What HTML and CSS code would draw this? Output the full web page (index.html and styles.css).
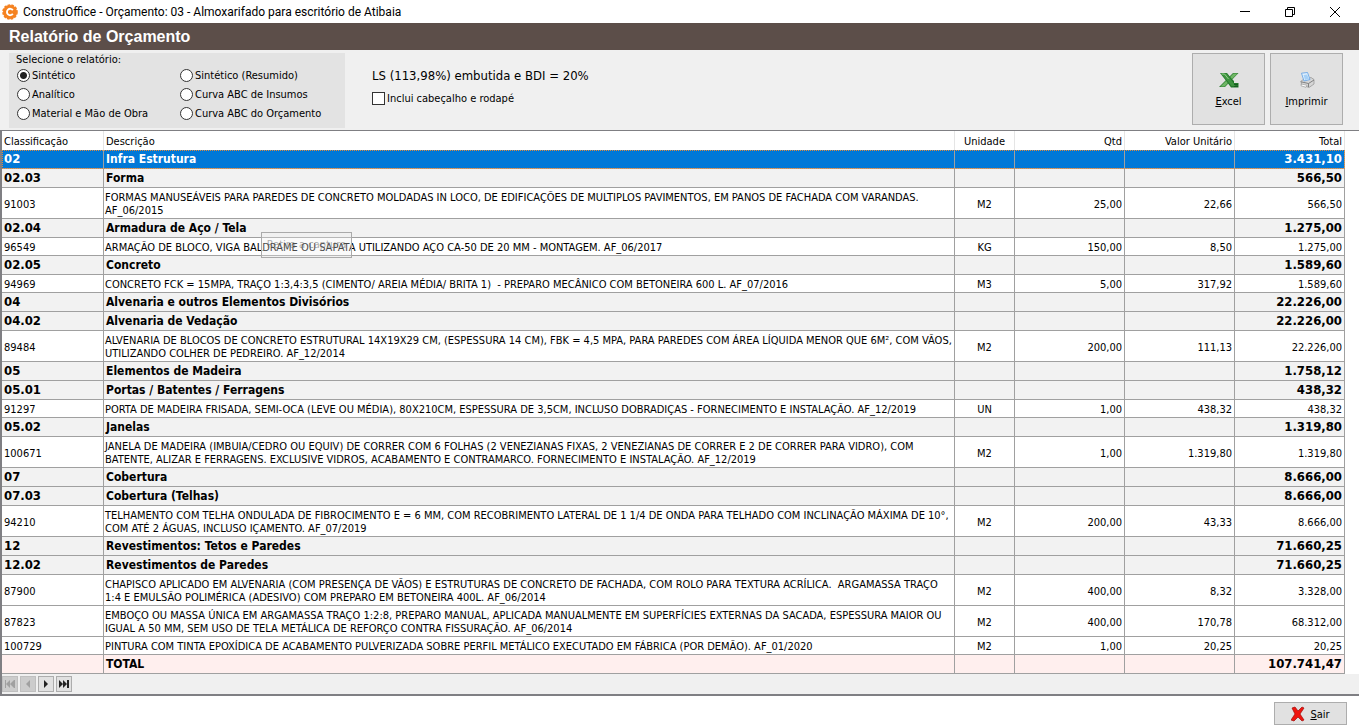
FILE: index.html
```html
<!DOCTYPE html>
<html lang="pt-BR">
<head>
<meta charset="utf-8">
<title>ConstruOffice - Orçamento: 03 - Almoxarifado para escritório de Atibaia</title>
<link rel="stylesheet" href="styles.css">
</head>
<body>
<header class="titlebar">
  <svg class="app-icon" viewBox="0 0 16 16" width="16" height="16" aria-hidden="true"><circle cx="8" cy="8" r="7" fill="#f58220" stroke="#f58220" stroke-width="1.6" stroke-dasharray="2.6 1.2"/><path d="M10.8 6.2A3.2 3.2 0 1 0 10.8 9.8" fill="none" stroke="#fff" stroke-width="1.9"/></svg>
  <span class="window-title">ConstruOffice - Orçamento: 03 - Almoxarifado para escritório de Atibaia</span>
  <div class="window-controls">
    <button type="button" aria-label="Minimizar"><svg viewBox="0 0 12 12" width="12" height="12"><path d="M1 5.500h10" stroke="#000" fill="none"/></svg></button>
    <button type="button" aria-label="Restaurar"><svg viewBox="0 0 12 12" width="12" height="12"><path d="M1.500 3.500h7v7h-7zM3.500 3.500v-2h7v7h-2" stroke="#000" fill="none"/></svg></button>
    <button type="button" aria-label="Fechar"><svg viewBox="0 0 12 12" width="12" height="12"><path d="M1 1l10 10M11 1L1 11" stroke="#000" fill="none"/></svg></button>
  </div>
</header>
<h1 class="heading">Relatório de Orçamento</h1>
<section class="toolbar">
  <fieldset class="report-types">
    <legend>Selecione o relatório:</legend>
    <div class="options">
      <label><input type="radio" name="tipo" checked>Sintético</label>
      <label><input type="radio" name="tipo">Sintético (Resumido)</label>
      <label><input type="radio" name="tipo">Analítico</label>
      <label><input type="radio" name="tipo">Curva ABC de Insumos</label>
      <label><input type="radio" name="tipo">Material e Mão de Obra</label>
      <label><input type="radio" name="tipo">Curva ABC do Orçamento</label>
    </div>
  </fieldset>
  <div class="settings">
    <p class="rates">LS (113,98%) embutida e BDI = 20%</p>
    <label><input type="checkbox">Inclui cabeçalho e rodapé</label>
  </div>
  <div class="actions">
    <button type="button" class="action">
      <svg viewBox="0 0 20 16" width="20" height="16" aria-hidden="true"><path d="M14 1h5.500L6 15H0z" fill="#2f7d32"/><path d="M14.500 1.500h4L5.500 14.500H1.500z" fill="#6fb765"/><path d="M1 1h7l4 5 3 3v2h4.500v4.500H12L8 10z" fill="#23782b"/><path d="M2 1.500h5.500l9 12.500h-4z" fill="#3f9440"/><path d="M2.500 2h3l4 5" fill="none" stroke="#8fcf86"/><path d="M15 12.500h4M15 14.500h4" stroke="#165c20"/></svg>
      <span><u>E</u>xcel</span>
    </button>
    <button type="button" class="action">
      <svg viewBox="0 0 16 16" width="16" height="16" aria-hidden="true"><path d="M2.500 11l-1-1.500L5 7l7-1.500 3 2v4.500l-5 3.500-8-3z" fill="#d6d6d6" stroke="#999" stroke-width=".8"/><path d="M2.500 1.200L8.500.5l2.500 7-6 1.500z" fill="#e3f1fd" stroke="#6aa6e6" stroke-width=".9"/><path d="M4.500 3l3.500-.5 2 4.500-4 1z" fill="#a5d0f7"/><path d="M2 9.800l7.500 1.700L15 8M9.500 11.500v3.500" fill="none" stroke="#777" stroke-width=".9"/><path d="M2.500 12l5.500 1.300-1 2-5-1.500z" fill="#fff" stroke="#999" stroke-width=".7"/></svg>
      <span><u>I</u>mprimir</span>
    </button>
  </div>
</section>
<main class="grid-panel">
  <table class="budget">
    <colgroup><col class="c-code"><col><col class="c-unit"><col class="c-num"><col class="c-num"><col class="c-num"></colgroup>
    <thead><tr><th>Classificação</th><th>Descrição</th><th>Unidade</th><th>Qtd</th><th>Valor Unitário</th><th>Total</th></tr></thead>
    <tbody>
      <tr class="group selected"><td>02</td><td>Infra Estrutura</td><td></td><td></td><td></td><td>3.431,10</td></tr>
      <tr class="group"><td>02.03</td><td>Forma</td><td></td><td></td><td></td><td>566,50</td></tr>
      <tr class="item"><td>91003</td><td>FORMAS MANUSEÁVEIS PARA PAREDES DE CONCRETO MOLDADAS IN LOCO, DE EDIFICAÇÕES DE MULTIPLOS PAVIMENTOS, EM PANOS DE FACHADA COM VARANDAS.<br>AF_06/2015</td><td>M2</td><td>25,00</td><td>22,66</td><td>566,50</td></tr>
      <tr class="group"><td>02.04</td><td>Armadura de Aço / Tela</td><td></td><td></td><td></td><td>1.275,00</td></tr>
      <tr class="item"><td>96549</td><td class="hinted">ARMAÇÃO DE BLOCO, VIGA BALDRAME OU SAPATA UTILIZANDO AÇO CA-50 DE 20 MM - MONTAGEM. AF_06/2017<span class="hint">Retira a captura</span></td><td>KG</td><td>150,00</td><td>8,50</td><td>1.275,00</td></tr>
      <tr class="group"><td>02.05</td><td>Concreto</td><td></td><td></td><td></td><td>1.589,60</td></tr>
      <tr class="item"><td>94969</td><td>CONCRETO FCK = 15MPA, TRAÇO 1:3,4:3,5 (CIMENTO/ AREIA MÉDIA/ BRITA 1) &nbsp;- PREPARO MECÂNICO COM BETONEIRA 600 L. AF_07/2016</td><td>M3</td><td>5,00</td><td>317,92</td><td>1.589,60</td></tr>
      <tr class="group"><td>04</td><td>Alvenaria e outros Elementos Divisórios</td><td></td><td></td><td></td><td>22.226,00</td></tr>
      <tr class="group"><td>04.02</td><td>Alvenaria de Vedação</td><td></td><td></td><td></td><td>22.226,00</td></tr>
      <tr class="item"><td>89484</td><td>ALVENARIA DE BLOCOS DE CONCRETO ESTRUTURAL 14X19X29 CM, (ESPESSURA 14 CM), FBK = 4,5 MPA, PARA PAREDES COM ÁREA LÍQUIDA MENOR QUE 6M², COM VÃOS,<br>UTILIZANDO COLHER DE PEDREIRO. AF_12/2014</td><td>M2</td><td>200,00</td><td>111,13</td><td>22.226,00</td></tr>
      <tr class="group"><td>05</td><td>Elementos de Madeira</td><td></td><td></td><td></td><td>1.758,12</td></tr>
      <tr class="group"><td>05.01</td><td>Portas / Batentes / Ferragens</td><td></td><td></td><td></td><td>438,32</td></tr>
      <tr class="item"><td>91297</td><td>PORTA DE MADEIRA FRISADA, SEMI-OCA (LEVE OU MÉDIA), 80X210CM, ESPESSURA DE 3,5CM, INCLUSO DOBRADIÇAS - FORNECIMENTO E INSTALAÇÃO. AF_12/2019</td><td>UN</td><td>1,00</td><td>438,32</td><td>438,32</td></tr>
      <tr class="group"><td>05.02</td><td>Janelas</td><td></td><td></td><td></td><td>1.319,80</td></tr>
      <tr class="item"><td>100671</td><td>JANELA DE MADEIRA (IMBUIA/CEDRO OU EQUIV) DE CORRER COM 6 FOLHAS (2 VENEZIANAS FIXAS, 2 VENEZIANAS DE CORRER E 2 DE CORRER PARA VIDRO), COM<br>BATENTE, ALIZAR E FERRAGENS. EXCLUSIVE VIDROS, ACABAMENTO E CONTRAMARCO. FORNECIMENTO E INSTALAÇÃO. AF_12/2019</td><td>M2</td><td>1,00</td><td>1.319,80</td><td>1.319,80</td></tr>
      <tr class="group"><td>07</td><td>Cobertura</td><td></td><td></td><td></td><td>8.666,00</td></tr>
      <tr class="group"><td>07.03</td><td>Cobertura (Telhas)</td><td></td><td></td><td></td><td>8.666,00</td></tr>
      <tr class="item"><td>94210</td><td>TELHAMENTO COM TELHA ONDULADA DE FIBROCIMENTO E = 6 MM, COM RECOBRIMENTO LATERAL DE 1 1/4 DE ONDA PARA TELHADO COM INCLINAÇÃO MÁXIMA DE 10°,<br>COM ATÉ 2 ÁGUAS, INCLUSO IÇAMENTO. AF_07/2019</td><td>M2</td><td>200,00</td><td>43,33</td><td>8.666,00</td></tr>
      <tr class="group"><td>12</td><td>Revestimentos: Tetos e Paredes</td><td></td><td></td><td></td><td>71.660,25</td></tr>
      <tr class="group"><td>12.02</td><td>Revestimentos de Paredes</td><td></td><td></td><td></td><td>71.660,25</td></tr>
      <tr class="item"><td>87900</td><td>CHAPISCO APLICADO EM ALVENARIA (COM PRESENÇA DE VÃOS) E ESTRUTURAS DE CONCRETO DE FACHADA, COM ROLO PARA TEXTURA ACRÍLICA. &nbsp;ARGAMASSA TRAÇO<br>1:4 E EMULSÃO POLIMÉRICA (ADESIVO) COM PREPARO EM BETONEIRA 400L. AF_06/2014</td><td>M2</td><td>400,00</td><td>8,32</td><td>3.328,00</td></tr>
      <tr class="item"><td>87823</td><td>EMBOÇO OU MASSA ÚNICA EM ARGAMASSA TRAÇO 1:2:8, PREPARO MANUAL, APLICADA MANUALMENTE EM SUPERFÍCIES EXTERNAS DA SACADA, ESPESSURA MAIOR OU<br>IGUAL A 50 MM, SEM USO DE TELA METÁLICA DE REFORÇO CONTRA FISSURAÇÃO. AF_06/2014</td><td>M2</td><td>400,00</td><td>170,78</td><td>68.312,00</td></tr>
      <tr class="item"><td>100729</td><td>PINTURA COM TINTA EPOXÍDICA DE ACABAMENTO PULVERIZADA SOBRE PERFIL METÁLICO EXECUTADO EM FÁBRICA (POR DEMÃO). AF_01/2020</td><td>M2</td><td>1,00</td><td>20,25</td><td>20,25</td></tr>
    </tbody>
    <tfoot><tr class="group total"><td></td><td>TOTAL</td><td></td><td></td><td></td><td>107.741,47</td></tr></tfoot>
  </table>
  <nav class="navigator">
    <button type="button" disabled aria-label="Primeiro"><svg viewBox="0 0 12 8" width="12" height="8"><path d="M1 0h1v8H1zM6 0v8L2 4zM10 0v8L6 4zM10 0h1v8h-1z"/></svg></button>
    <button type="button" disabled aria-label="Anterior"><svg viewBox="0 0 12 8" width="12" height="8"><path d="M8 0v8L4 4z"/></svg></button>
    <button type="button" aria-label="Próximo"><svg viewBox="0 0 12 8" width="12" height="8"><path d="M4 0v8l4-4z"/></svg></button>
    <button type="button" aria-label="Último"><svg viewBox="0 0 12 8" width="12" height="8"><path d="M1 0v8l4-4zM5 0v8l4-4zM9 0h2v8H9z"/></svg></button>
  </nav>
</main>
<footer class="bottom">
  <button type="button" class="exit"><svg viewBox="0 0 14 16" width="14" height="16" aria-hidden="true"><path d="M1 2l3-1 3 4 4-4 2 1-4 6 4 6-2 1-4-4-4 4-3-1 4-6z" fill="#f0150f" stroke="#a00b08" stroke-width=".7"/></svg><span><u>S</u>air</span></button>
</footer>
</body>
</html>
```
FILE: styles.css
```css
* { box-sizing: border-box; }
body {
  margin: 0;
  min-height: 100vh;
  background: #fff;
  color: #000;
  font: 11px/13px "DejaVu Sans Condensed", Tahoma, sans-serif;
}
button { font: inherit; color: inherit; padding: 0; }
.titlebar {
  display: flex;
  align-items: center;
  gap: 5px;
  height: 23px;
  padding: 0 2px;
}
.window-title { flex: 1; font: 12px/16px Roboto, "Segoe UI", sans-serif; }
.window-controls { display: flex; }
.window-controls button {
  width: 45px;
  height: 22px;
  display: grid;
  place-items: center;
  border: 0;
  background: none;
}
.heading {
  margin: 0;
  padding: 0 9px;
  background: #5c4e49;
  color: #fff;
  font: bold 16px/27px "Liberation Sans", Arial, sans-serif;
}
.toolbar {
  display: flex;
  align-items: flex-start;
  height: 80px;
  padding: 3px 16px 0 9px;
  background: #f0f0f0;
}
.report-types {
  margin: 0;
  border: 0;
  padding: 0 0 5px 7px;
  width: 336px;
  background: #e3e3e3;
}
.report-types legend { float: left; width: 100%; padding: 0; }
.options {
  clear: both;
  display: grid;
  grid-template-columns: 163px 1fr;
  grid-auto-rows: 19px;
}
.options label, .settings label { display: flex; align-items: center; gap: 2px; }
input {
  appearance: none;
  width: 13px;
  height: 13px;
  margin: 0;
  border: 1px solid #333;
  background: #fff;
}
input[type="radio"] { border-radius: 50%; margin-left: 1px; }
input[type="radio"]:checked { background: radial-gradient(circle, #222 3px, #fff 4px); }
.settings { flex: 1; padding: 15px 0 0 27px; }
.rates { margin: 0 0 8px; font-size: 13px; line-height: 16px; }
.actions { display: flex; gap: 5px; }
.action {
  width: 73px;
  height: 72px;
  display: flex;
  flex-direction: column;
  align-items: center;
  justify-content: center;
  gap: 7px;
  padding-top: 2px;
  border: 1px solid #adadad;
  background: #e1e1e1;
}
.grid-panel {
  border: solid #7f7f83;
  border-width: 1px 0 2px 2px;
}
.budget {
  width: calc(100% - 14px);
  table-layout: fixed;
  border-collapse: separate;
  border-spacing: 0;
}
.c-code { width: 102px; }
.c-unit { width: 60px; }
.c-num { width: 110px; }
th, td {
  padding: 0 2px;
  text-align: left;
  white-space: nowrap;
  border: solid #a0a0a0;
  border-width: 0 1px 1px 0;
}
th { height: 19px; padding-top: 1px; font-weight: normal; border-width: 0 1px 0 0; border-color: #e5e5e5; }
td:nth-child(3), th:nth-child(3) { text-align: center; }
td:nth-child(n+4), th:nth-child(n+4) { text-align: right; }
.item td { padding: 3px 2px 1px; }
.item td:nth-child(2) { padding-left: 1px; }
.group td { height: 19px; background: #f2f2f2; font-size: 13px; line-height: 16px; font-weight: bold; }
.group td:nth-child(2) { font-size: 12px; }
.group.selected td { background: #0078d7; color: #fff; }
.selected { outline: 1px dotted #e08a3c; outline-offset: -1px; }
.group.total td { background: #ffefee; }
.hinted { position: relative; }
.hint {
  position: absolute;
  left: 157px;
  top: -6px;
  width: 91px;
  height: 26px;
  border: 1px solid #aaa;
  background: rgba(240, 240, 240, .3);
  color: rgba(90, 90, 90, .5);
  line-height: 24px;
  text-align: center;
}
.navigator {
  display: flex;
  gap: 2px;
  height: 20px;
  padding-top: 2px;
  background: #f0f0f0;
}
.navigator button {
  width: 16px;
  height: 16px;
  display: grid;
  place-items: center;
  border: 1px solid #adadad;
  background: #e1e1e1;
}
.navigator svg { fill: #222; }
.navigator button:disabled { background: #ccc; border-color: #bfbfbf; }
.navigator button:disabled svg { fill: #a0a0a0; }
.bottom { display: flex; justify-content: flex-end; padding: 6px 12px 0 0; }
.exit {
  width: 73px;
  height: 23px;
  display: flex;
  align-items: center;
  justify-content: center;
  gap: 5px;
  padding-top: 1px;
  border: 1px solid #adadad;
  background: #e1e1e1;
}
```
